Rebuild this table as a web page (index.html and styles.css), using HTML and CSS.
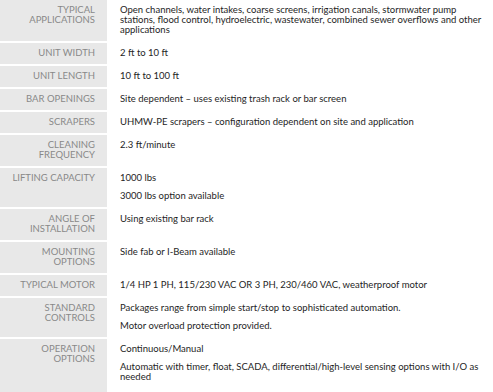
FILE: index.html
```html
<!DOCTYPE html>
<html>
<head>
<meta charset="utf-8">
<link rel="stylesheet" href="styles.css">
</head>
<body>
<div class="specs">
  <div class="label">Typical<br>applications</div>
  <div class="value"><p>Open channels, water intakes, coarse screens, irrigation canals, stormwater pump stations, flood control, hydroelectric, wastewater, combined sewer overflows and other applications</p></div>

  <div class="label">Unit width</div>
  <div class="value"><p>2 ft to 10 ft</p></div>

  <div class="label">Unit length</div>
  <div class="value"><p>10 ft to 100 ft</p></div>

  <div class="label">Bar openings</div>
  <div class="value"><p>Site dependent – uses existing trash rack or bar screen</p></div>

  <div class="label">Scrapers</div>
  <div class="value"><p>UHMW-PE scrapers – configuration dependent on site and application</p></div>

  <div class="label">Cleaning<br>frequency</div>
  <div class="value"><p>2.3 ft/minute</p></div>

  <div class="label">Lifting capacity</div>
  <div class="value"><p>1000 lbs</p><p>3000 lbs option available</p></div>

  <div class="label">Angle of<br>installation</div>
  <div class="value"><p>Using existing bar rack</p></div>

  <div class="label">Mounting<br>options</div>
  <div class="value"><p>Side fab or I-Beam available</p></div>

  <div class="label">Typical motor</div>
  <div class="value"><p>1/4 HP 1 PH, 115/230 VAC OR 3 PH, 230/460 VAC, weatherproof motor</p></div>

  <div class="label">Standard<br>controls</div>
  <div class="value"><p>Packages range from simple start/stop to sophisticated automation.</p><p>Motor overload protection provided.</p></div>

  <div class="label last">Operation<br>options</div>
  <div class="value last"><p>Continuous/Manual</p><p>Automatic with timer, float, SCADA, differential/high-level sensing options with I/O as needed</p></div>
</div>
</body>
</html>
```

FILE: styles.css
```css
html, body {
  margin: 0;
  padding: 0;
  background: #ffffff;
}

.specs {
  display: grid;
  grid-template-columns: 107px 1fr;
  row-gap: 2px;
  font-family: Lato, "Liberation Sans", sans-serif;
  font-size: 9.5px;
  line-height: 10px;
}

.label {
  background: #e8e8e8;
  color: #888888;
  text-transform: uppercase;
  text-align: right;
  padding: 5px 12px 6px 4px;
}

.value {
  color: #1e1e1e;
  padding: 5px 8px 6px 13px;
}

.value p {
  margin: 0;
}

.value p + p {
  margin-top: 8px;
}

.last {
  padding-bottom: 14px;
}
```
